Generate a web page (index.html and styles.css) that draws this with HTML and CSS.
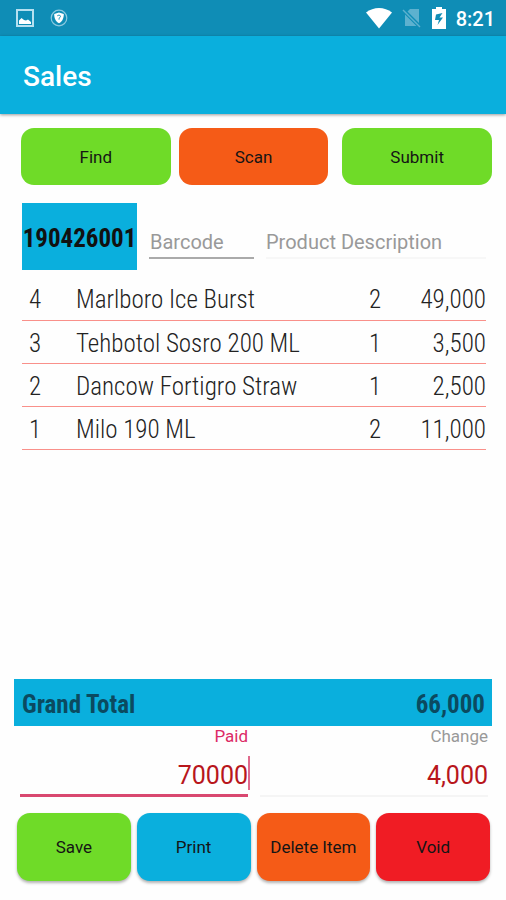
FILE: index.html
```html
<!DOCTYPE html>
<html lang="en">
<head>
    <meta charset="UTF-8">
    <meta name="viewport" content="width=device-width, initial-scale=1">
    <title>Sales</title>
    <link rel="stylesheet" href="styles.css">
</head>
<body>
    <div class="status-bar">
        <svg width="18" height="18" viewBox="0 0 18 18">
            <rect x="1" y="1" width="16" height="16" fill="none" stroke="#b5e0f0" stroke-width="2"/>
            <path d="M3 15v-3.500l2.500-2.500 2.500 2 2 .5 2-1 3 2.500v2z" fill="#fff"/>
        </svg>
        <svg width="18" height="18" viewBox="0 0 18 18">
            <circle cx="9" cy="9" r="7.800" fill="none" stroke="#8cc9df" stroke-width="1.200"/>
            <path d="M9 3.500l4.800 1.500c0 4-1 7-4.800 9.300C5.200 12 4.200 9 4.200 5z" fill="#fff"/>
            <path d="M7.300 6.800c1-1 3.400-.6 3.200.6-.1 1-1.500 1-1.500 3.200" fill="none" stroke="#0f8db6" stroke-width="1"/>
        </svg>
        <div class="status-right">
            <svg width="26" height="22" viewBox="0 0 26 22">
                <path d="M0 5.500C7.500-.5 18.500-.5 26 5.500L13 21.500z" fill="#fff"/>
            </svg>
            <svg width="20" height="20" viewBox="0 0 20 20">
                <path d="M8 1h9v14L5.500 3.500zM3 6.500L14.500 18H3z" fill="#5db1cf"/>
                <path d="M1 2l17 17" stroke="#5db1cf" stroke-width="1.500"/>
            </svg>
            <svg width="14" height="22" viewBox="0 0 14 22">
                <path d="M4 0h6v2h4v20H0V2h4z" fill="#fff"/>
                <path d="M10.500 6L4 7.500 3 13h4l-1.500 5L11 10.500H7.500z" fill="#0f8db6"/>
            </svg>
            <span class="clock">8:21</span>
        </div>
    </div>
    <header class="app-bar">
        <h1>Sales</h1>
    </header>

    <main class="content">
        <div class="top-buttons">
            <button type="button" class="btn green">Find</button>
            <button type="button" class="btn orange">Scan</button>
            <button type="button" class="btn green submit">Submit</button>
        </div>

        <div class="entry">
            <div class="receipt-no">190426001</div>
            <input type="text" class="barcode" placeholder="Barcode" aria-label="Barcode">
            <input type="text" class="description" placeholder="Product Description" aria-label="Product Description">
        </div>

        <table class="items">
            <tbody>
                <tr><td class="no">4</td><td>Marlboro Ice Burst</td><td class="qty">2</td><td class="price">49,000</td></tr>
                <tr><td class="no">3</td><td>Tehbotol Sosro 200 ML</td><td class="qty">1</td><td class="price">3,500</td></tr>
                <tr><td class="no">2</td><td>Dancow Fortigro Straw</td><td class="qty">1</td><td class="price">2,500</td></tr>
                <tr><td class="no">1</td><td>Milo 190 ML</td><td class="qty">2</td><td class="price">11,000</td></tr>
            </tbody>
        </table>
    </main>

    <!-- totals and actions stay at the bottom -->
    <footer>
        <div class="total">
            <span>Grand Total</span>
            <span>66,000</span>
        </div>
        <div class="payment">
            <div class="field paid">
                <label for="paid">Paid</label>
                <div class="value">
                    <input type="text" id="paid" value="70000">
                    <span class="caret"></span>
                </div>
            </div>
            <div class="field change">
                <label for="change">Change</label>
                <div class="value">
                    <input type="text" id="change" value="4,000" readonly>
                </div>
            </div>
        </div>
        <div class="actions">
            <button type="button" class="btn green">Save</button>
            <button type="button" class="btn blue">Print</button>
            <button type="button" class="btn orange">Delete Item</button>
            <button type="button" class="btn red">Void</button>
        </div>
    </footer>
</body>
</html>
```
FILE: styles.css
```css
* {
    box-sizing: border-box;
}
body {
    margin: 0;
    min-height: 100vh;
    display: flex;
    flex-direction: column;
    font-family: Roboto, sans-serif;
    background: #fefefe;
}
button, input {
    font-family: inherit;
}
.status-bar {
    display: flex;
    align-items: center;
    gap: 16px;
    height: 36px;
    padding: 0 11px 0 16px;
    background: #0f8db6;
    color: #fff;
}
.status-right {
    display: flex;
    align-items: center;
    gap: 10px;
    margin-left: auto;
}
.clock {
    padding-top: 2px;
    font-size: 20px;
    font-weight: 500;
}
.app-bar {
    display: flex;
    align-items: center;
    height: 78px;
    padding: 2px 23px 0;
    background: #0aafdd;
    box-shadow: 0 1px 3px rgba(0, 0, 0, 0.4);
}
h1 {
    margin: 0;
    color: #fff;
    font-size: 28px;
    font-weight: 500;
}
.content {
    flex: 1;
    padding: 14px 14px 0 21px;
}
.btn {
    flex: 1 1 0;
    min-width: 0;
    padding: 0;
    border: 0;
    border-radius: 13px;
    color: #151515;
    font-size: 17px;
}
.green {
    background: #6fdb28;
}
.orange {
    background: #f55b17;
}
.blue {
    background: #0aafdd;
}
.red {
    background: #f01c24;
}
.top-buttons {
    display: flex;
    gap: 8px;
}
.top-buttons .btn {
    height: 57px;
}
.top-buttons .submit {
    margin-left: 6px;
}
.entry {
    display: flex;
    align-items: center;
    margin: 18px 6px 7px 1px;
}
.receipt-no {
    width: 115px;
    height: 67px;
    padding-top: 2px;
    line-height: 67px;
    background: #0aafdd;
    color: #111;
    font-family: "Roboto Condensed", Roboto, sans-serif;
    font-size: 25px;
    font-weight: 700;
    text-align: center;
}
.entry input {
    height: 36px;
    margin: 9px 0 0 12px;
    padding: 3px 1px 0;
    border: 0;
    background: none;
    font-size: 20px;
    outline: 0;
}
.entry input::placeholder {
    color: #999;
}
.entry .barcode {
    width: 105px;
    border-bottom: 2px solid #aaa;
}
.entry .description {
    flex: 1;
    min-width: 0;
    padding-left: 0;
    border-bottom: 2px solid #f7f7f7;
}
.items {
    width: calc(100% - 7px);
    margin-left: 1px;
    border-collapse: collapse;
    color: #222;
    font-family: "Roboto Condensed", Roboto, sans-serif;
    font-size: 25px;
    font-weight: 300;
}
.items td {
    height: 43px;
    padding: 3px 0 0;
    border-bottom: 1px solid #f9908a;
    white-space: nowrap;
}
.items .no {
    width: 54px;
    padding-left: 7px;
}
.items .qty {
    width: 30px;
    text-align: center;
}
.items .price {
    width: 96px;
    text-align: right;
}
.total {
    display: flex;
    justify-content: space-between;
    align-items: center;
    height: 47px;
    margin: 0 14px;
    padding: 3px 7px 0 8px;
    background: #0aafdd;
    color: #0b4a60;
    font-family: "Roboto Condensed", Roboto, sans-serif;
    font-size: 25px;
    font-weight: 700;
}
.payment {
    display: flex;
    gap: 12px;
    padding: 0 18px 0 20px;
}
.field {
    flex: 1 1 0;
    min-width: 0;
    text-align: right;
}
.field label {
    display: block;
    height: 21px;
    line-height: 21px;
    font-size: 17px;
}
.value {
    position: relative;
    height: 50px;
}
.value input {
    width: 100%;
    height: 100%;
    padding: 9px 0 0;
    border: 0;
    background: none;
    color: #b8161c;
    font-size: 25px;
    text-align: right;
    outline: 0;
}
.paid label {
    color: #dc2a66;
}
.paid .value {
    border-bottom: 3px solid #d94870;
}
.change label {
    color: #999;
}
.change .value {
    border-bottom: 2px solid #f5f5f5;
}
.caret {
    position: absolute;
    right: -2px;
    top: 9px;
    width: 2px;
    height: 34px;
    background: #e0698c;
}
.actions {
    display: flex;
    gap: 6px;
    padding: 16px 16px 19px 17px;
}
.actions .btn {
    height: 68px;
    box-shadow: 0 2px 3px rgba(0, 0, 0, 0.3);
}
```
